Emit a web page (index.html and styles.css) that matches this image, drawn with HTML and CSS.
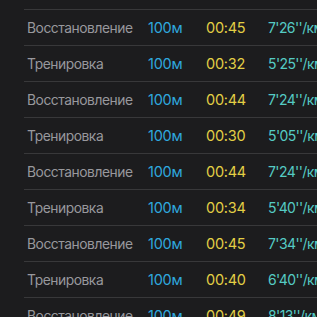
FILE: index.html
```html
<!DOCTYPE html>
<html lang="ru">
<head>
<meta charset="utf-8">
<link rel="stylesheet" href="styles.css">
</head>
<body>
<div class="splits">
  <div class="row"><span class="kind">Восстановление</span><span class="dist">100м</span><span class="time">00:45</span><span class="pace">7'26''/км</span></div>
  <div class="row"><span class="kind">Тренировка</span><span class="dist">100м</span><span class="time">00:32</span><span class="pace">5'25''/км</span></div>
  <div class="row"><span class="kind">Восстановление</span><span class="dist">100м</span><span class="time">00:44</span><span class="pace">7'24''/км</span></div>
  <div class="row"><span class="kind">Тренировка</span><span class="dist">100м</span><span class="time">00:30</span><span class="pace">5'05''/км</span></div>
  <div class="row"><span class="kind">Восстановление</span><span class="dist">100м</span><span class="time">00:44</span><span class="pace">7'24''/км</span></div>
  <div class="row"><span class="kind">Тренировка</span><span class="dist">100м</span><span class="time">00:34</span><span class="pace">5'40''/км</span></div>
  <div class="row"><span class="kind">Восстановление</span><span class="dist">100м</span><span class="time">00:45</span><span class="pace">7'34''/км</span></div>
  <div class="row"><span class="kind">Тренировка</span><span class="dist">100м</span><span class="time">00:40</span><span class="pace">6'40''/км</span></div>
  <div class="row"><span class="kind">Восстановление</span><span class="dist">100м</span><span class="time">00:49</span><span class="pace">8'13''/км</span></div>
</div>
</body>
</html>
```

FILE: styles.css
```css
html, body {
  margin: 0;
  padding: 0;
  background: #1c1c1e;
  overflow: hidden;
}

body {
  font-family: Inter, "Noto Sans", sans-serif;
  font-size: 14.5px;
  letter-spacing: -0.25px;
  width: 317px;
  height: 317px;
}

.splits {
  padding-top: 9px;
  margin-left: 24px;
}

.row {
  display: grid;
  grid-template-columns: 121px 58px 62px auto;
  align-items: center;
  height: 35px;
  border-top: 1px solid #38383a;
  padding-left: 3px;
  white-space: nowrap;
  overflow: hidden;
}

.kind {
  color: #98989d;
  font-size: 13.8px;
  letter-spacing: -0.45px;
}
.dist { color: #2fa8df; }
.time { color: #e3cf45; }
.pace {
  color: #55cbc4;
  font-size: 14px;
  letter-spacing: -0.6px;
}
```
